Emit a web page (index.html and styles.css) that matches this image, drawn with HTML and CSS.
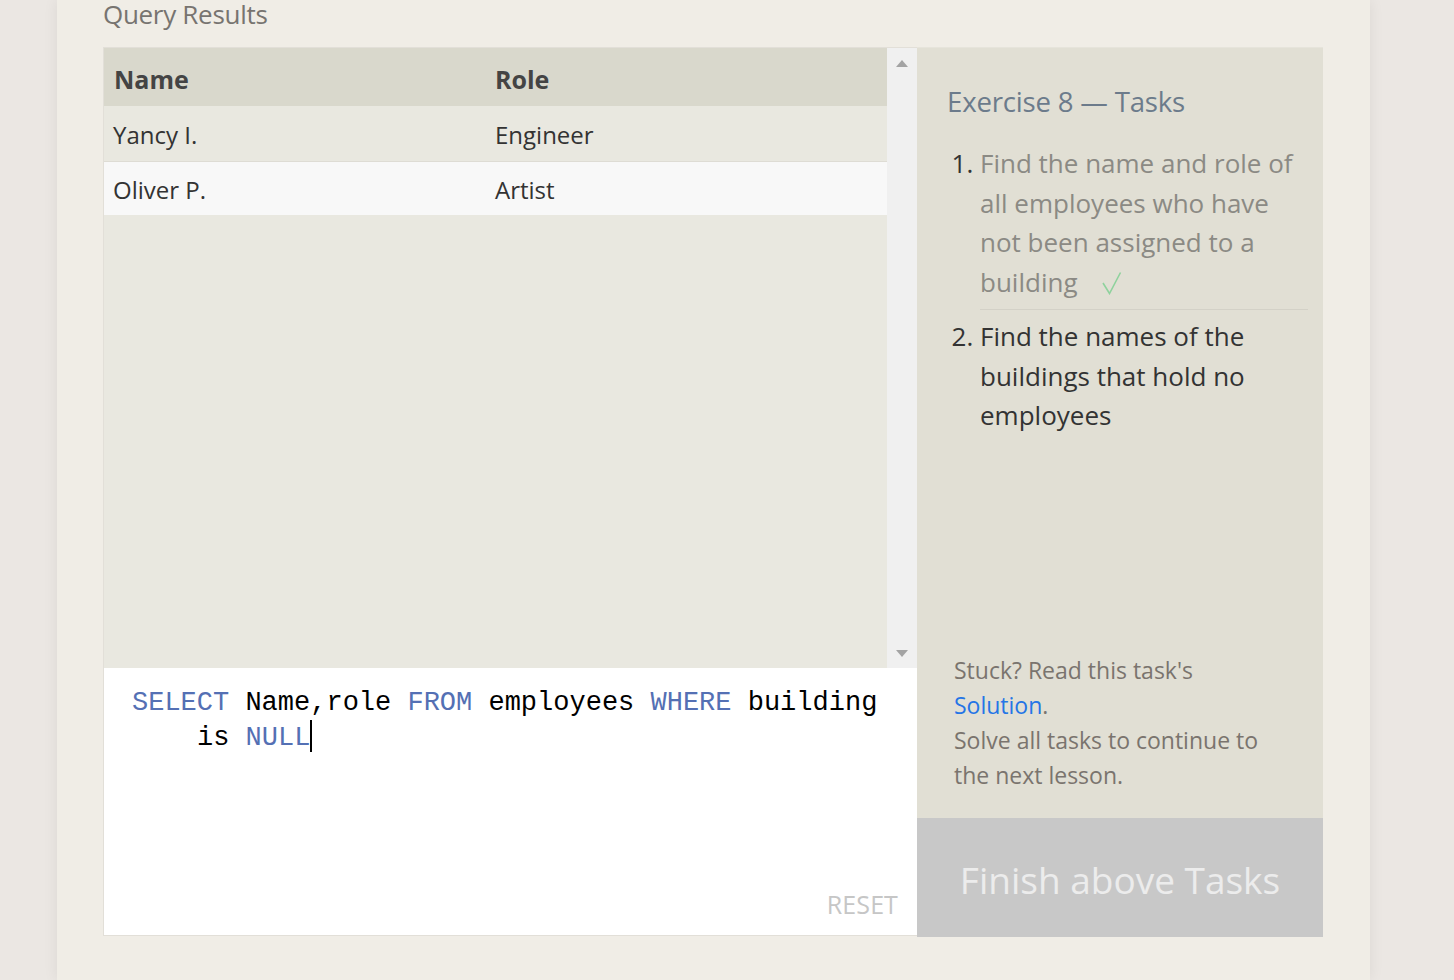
FILE: index.html
```html
<!DOCTYPE html>
<html>
<head>
<meta charset="utf-8">
<link rel="stylesheet" href="styles.css">
</head>
<body>
<div class="page">
  <main class="main">
    <h2 class="results-title">Query Results</h2>
    <div class="workspace">
      <section class="left">
        <div class="results">
          <div class="table-wrap">
            <table class="table">
              <thead>
                <tr><th class="c1">Name</th><th class="c2">Role</th></tr>
              </thead>
              <tbody>
                <tr class="odd"><td>Yancy I.</td><td>Engineer</td></tr>
                <tr class="even"><td>Oliver P.</td><td>Artist</td></tr>
              </tbody>
            </table>
          </div>
          <div class="scrollbar">
            <span class="arrow up"></span>
            <span class="arrow down"></span>
          </div>
        </div>
        <div class="editor">
          <div class="code">
            <div class="line"><span class="kw">SELECT</span> Name,role <span class="kw">FROM</span> employees <span class="kw">WHERE</span> building</div>
            <div class="line wrap">is <span class="kw">NULL</span><span class="cursor"></span></div>
          </div>
          <div class="reset">RESET</div>
        </div>
      </section>
      <aside class="right">
        <div class="tasks">
          <h3 class="tasks-title">Exercise 8 — Tasks</h3>
          <ol class="task-list">
            <li class="task done">Find the name and role of all employees who have not been assigned to a building <svg class="check" width="20" height="24" viewBox="0 0 20 24"><polyline points="1,12 7.5,22.5 18.5,1.5" fill="none" stroke="#8fd29d" stroke-width="1.6" stroke-linejoin="miter"/></svg></li>
            <li class="task">Find the names of the buildings that hold no employees</li>
          </ol>
        </div>
        <div class="help">
          Stuck? Read this task's<br>
          <a class="solution">Solution</a>.<br>
          Solve all tasks to continue to the next lesson.
        </div>
        <div class="finish">Finish above Tasks</div>
      </aside>
    </div>
  </main>
</div>
</body>
</html>
```

FILE: styles.css
```css
* { box-sizing: border-box; }
html, body {
  margin: 0;
  height: 100%;
}
body {
  background: #ebe7e3;
  font-family: "Open Sans", "Noto Sans", sans-serif;
  overflow: hidden;
}
.page {
  height: 980px;
  display: flex;
}
.main {
  margin-left: 57px;
  width: 1313px;
  height: 980px;
  background: #f0ede6;
  box-shadow: 0 0 14px rgba(0,0,0,0.07);
  padding-left: 46px;
}
.results-title {
  margin: -7px 0 0;
  height: 54px;
  font-weight: 400;
  font-size: 26px;
  line-height: 42px;
  color: #777470;
  letter-spacing: -0.3px;
}
.workspace {
  display: flex;
  width: 1220px;
  height: 890px;
}
.left {
  width: 814px;
  display: flex;
  flex-direction: column;
  border: 1px solid #e2dfd8;
  border-right: none;
  height: 889px;
}
.results {
  display: flex;
  height: 620px;
  background: #e9e8e0;
}
.table-wrap {
  flex: 1;
}
.table {
  width: 100%;
  border-collapse: collapse;
  color: #333;
}
.table th {
  background: #d9d8cc;
  height: 58px;
  text-align: left;
  font-size: 25px;
  font-weight: 700;
  color: #444;
  padding: 4px 10px 0;
}
.table th.c1 { width: 381px; }
.table td {
  font-size: 24px;
  padding: 3px 9px 0;
  color: #333;
}
.table td + td { padding-left: 10px; }
.table tr.odd td {
  height: 55px;
  background: #e9e8e0;
  border-bottom: 1px solid #dedcd4;
}
.table tr.even td {
  height: 54px;
  background: #f8f8f8;
}
.scrollbar {
  width: 30px;
  background: #f0f0f0;
  position: relative;
}
.arrow {
  position: absolute;
  left: 9px;
  width: 0;
  height: 0;
  border-left: 6px solid transparent;
  border-right: 6px solid transparent;
}
.arrow.up { top: 12px; border-bottom: 7px solid #a3a3a3; }
.arrow.down { bottom: 11px; border-top: 7px solid #a3a3a3; }
.editor {
  flex: 1;
  background: #fff;
  position: relative;
  padding: 18px 0 0 28px;
}
.code {
  font-family: "Liberation Mono", "DejaVu Sans Mono", monospace;
  font-size: 27px;
  line-height: 35px;
  color: #000;
}
.line.wrap { padding-left: 65px; margin-top: -1px; }
.kw { color: #5470b4; }
.cursor {
  display: inline-block;
  width: 2px;
  height: 32px;
  background: #000;
  vertical-align: -7px;
}
.reset {
  position: absolute;
  right: 19px;
  bottom: 14px;
  font-size: 25px;
  color: #c6c6c6;
  letter-spacing: 0.1px;
}
.right {
  width: 406px;
  background: #e1dfd4;
  display: flex;
  flex-direction: column;
  border-top: 1px solid #e6e4db;
}
.tasks {
  flex: 1;
  padding: 35px 15px 0 30px;
}
.tasks-title {
  margin: 0 0 25px;
  font-weight: 400;
  font-size: 27.6px;
  line-height: 36px;
  color: #6c7b8b;
  letter-spacing: -0.2px;
}
.task-list {
  margin: 0;
  padding: 0 0 0 33px;
  font-size: 26px;
  line-height: 39.7px;
  color: #333;
}
.task::marker { color: #333; }
.task.done {
  color: #8b8a84;
  border-bottom: 1px solid #d3d1c7;
  padding-bottom: 6px;
  margin-bottom: 7px;
}
.check {
  margin-left: 18px;
  vertical-align: -3px;
}
.help {
  padding: 0 40px 25px 37px;
  font-size: 23px;
  line-height: 35px;
  color: #7a746e;
}
.solution {
  color: #2575e6;
  text-decoration: none;
}
.finish {
  height: 119px;
  background: #c8c8c8;
  color: #ececec;
  font-size: 37px;
  display: flex;
  align-items: center;
  justify-content: center;
  padding-top: 4px;
}
```
